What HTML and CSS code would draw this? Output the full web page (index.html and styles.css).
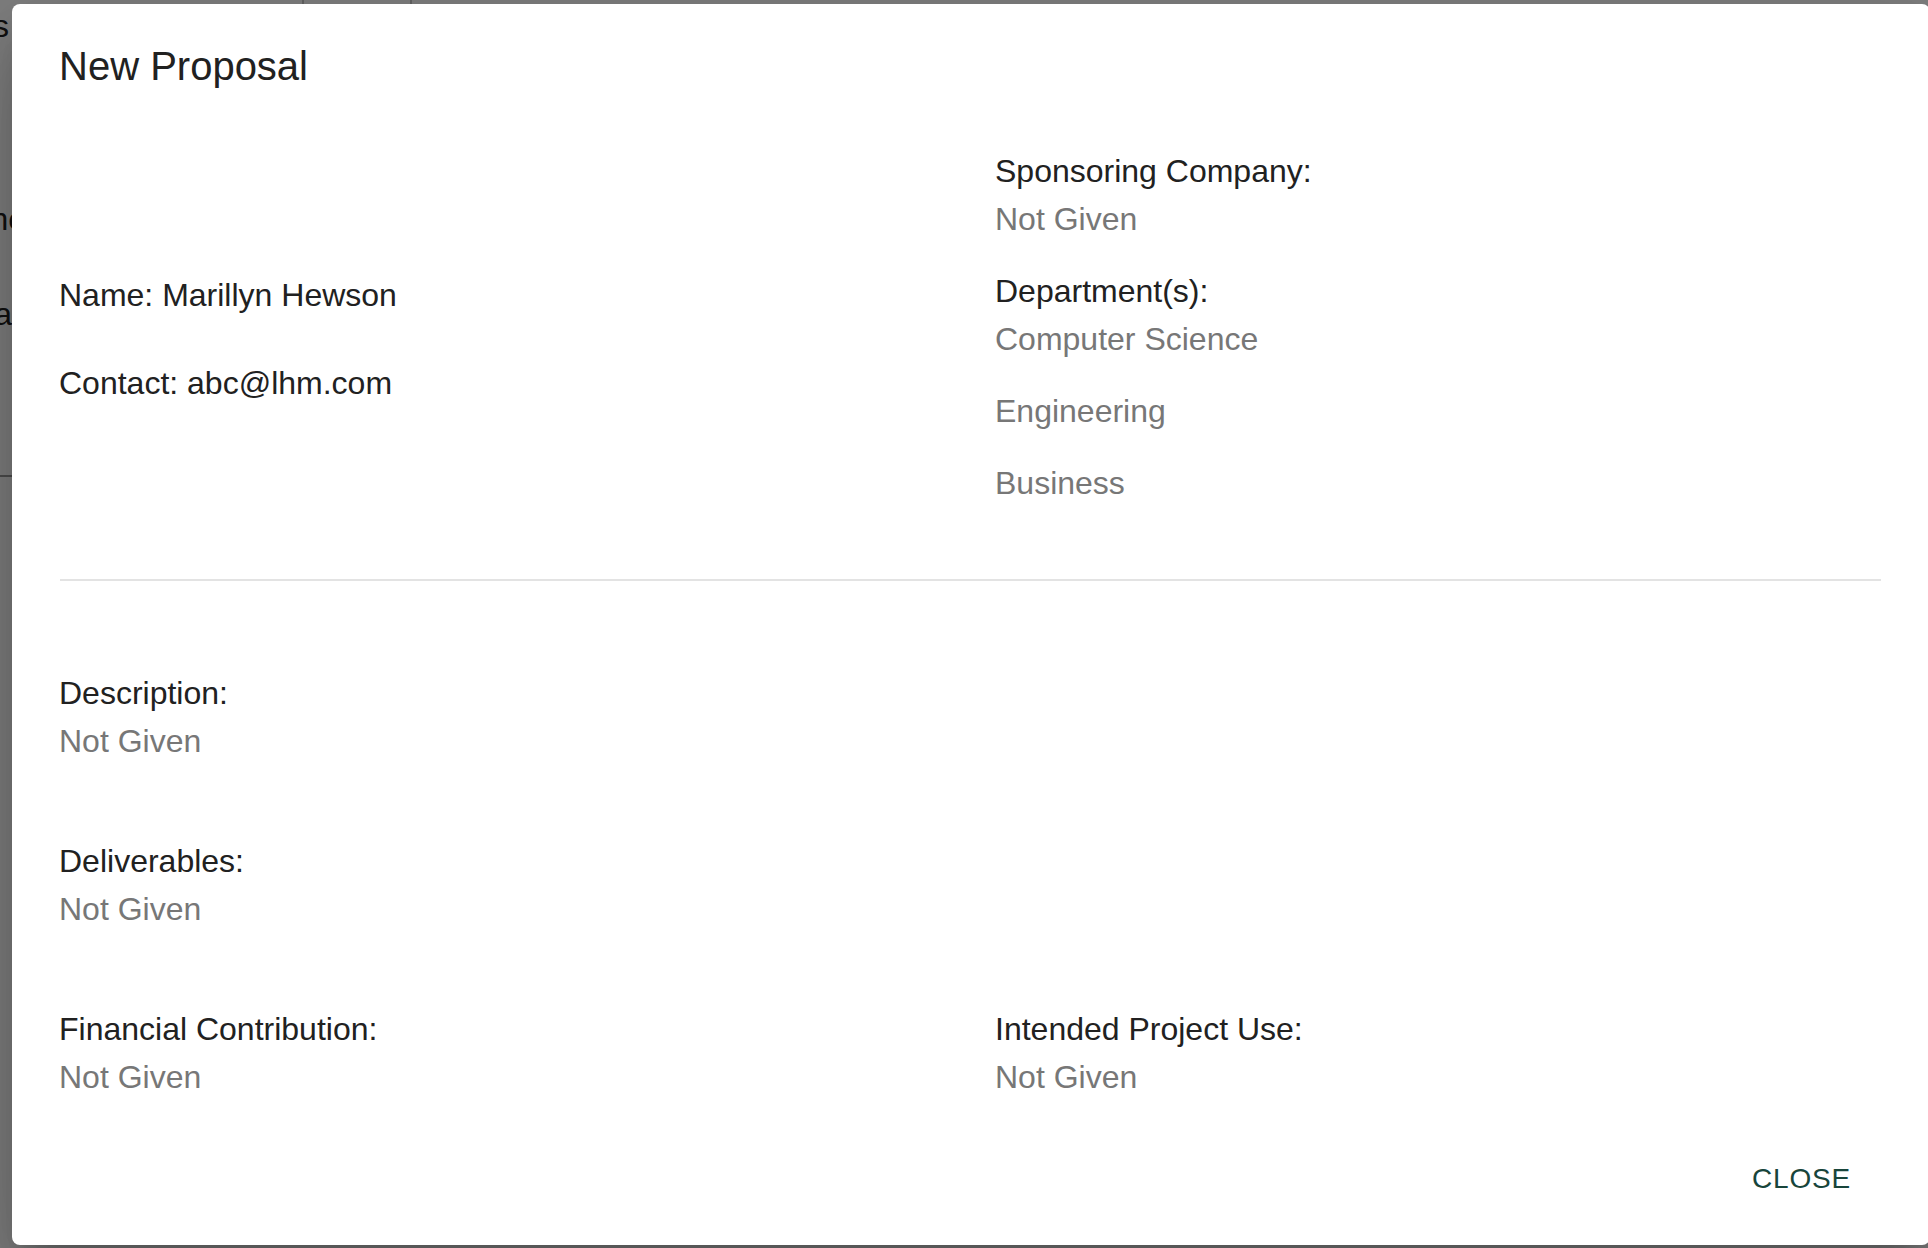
FILE: index.html
```html
<!DOCTYPE html>
<html lang="en">
<head>
<meta charset="utf-8">
<title>New Proposal</title>
<link rel="stylesheet" href="styles.css">
</head>
<body>
<div class="page">
  <div class="frag frag-1">Proposals</div>
  <div class="frag frag-2">Phone</div>
  <div class="frag frag-3">Data</div>
  <div class="rule rule-v1"></div>
  <div class="rule rule-v2"></div>
  <div class="rule rule-h"></div>
  <div class="backdrop"></div>

  <div class="dialog" role="dialog" aria-labelledby="dlg-title">
    <h2 class="title" id="dlg-title">New Proposal</h2>

    <div class="top-grid">
      <div class="contact-col">
        <p class="line">Name: Marillyn Hewson</p>
        <p class="line contact">Contact: abc@lhm.com</p>
      </div>
      <div class="info-col">
        <div class="field">
          <p class="label">Sponsoring Company:</p>
          <p class="value">Not Given</p>
        </div>
        <div class="field spaced">
          <p class="label">Department(s):</p>
          <p class="value">Computer Science</p>
          <p class="value extra">Engineering</p>
          <p class="value extra">Business</p>
        </div>
      </div>
    </div>

    <hr class="divider">

    <div class="field first-section">
      <p class="label">Description:</p>
      <p class="value">Not Given</p>
    </div>
    <div class="field section">
      <p class="label">Deliverables:</p>
      <p class="value">Not Given</p>
    </div>
    <div class="bottom-grid section">
      <div class="field">
        <p class="label">Financial Contribution:</p>
        <p class="value">Not Given</p>
      </div>
      <div class="field">
        <p class="label">Intended Project Use:</p>
        <p class="value">Not Given</p>
      </div>
    </div>

    <div class="actions">
      <button class="btn" type="button">Close</button>
    </div>
  </div>
</div>
</body>
</html>
```

FILE: styles.css
```css
html, body {
  margin: 0;
  padding: 0;
}

body {
  width: 1928px;
  height: 1248px;
  overflow: hidden;
  background: #ffffff;
  font-family: "Liberation Sans", Arial, Helvetica, sans-serif;
}

.page {
  position: relative;
  width: 1928px;
  height: 1248px;
  overflow: hidden;
  background: #ffffff;
}

/* fragments of the page behind the backdrop */
.frag {
  position: absolute;
  font-size: 32px;
  line-height: 48px;
  color: #222222;
  white-space: nowrap;
}
.frag-1 { right: 1919px; top: 2px; }
.frag-2 { right: 1902px; top: 195px; }
.frag-3 { right: 1916px; top: 290px; }

.rule {
  position: absolute;
  background: #c8c8c8;
}
.rule-v1 { left: 302px; top: 0; width: 2px; height: 40px; }
.rule-v2 { left: 410px; top: 0; width: 2px; height: 40px; }
.rule-h { left: 0; top: 475px; width: 60px; height: 2px; background: #9a9a9a; }

.backdrop {
  position: absolute;
  inset: 0;
  background: rgba(0, 0, 0, 0.5);
}

.dialog {
  position: absolute;
  left: 12px;
  top: 4px;
  width: 1918px;
  height: 1241px;
  box-sizing: border-box;
  padding: 0 48px 0 47px;
  background: #ffffff;
  border-radius: 8px;
  box-shadow:
    0 22px 30px -14px rgba(0, 0, 0, 0.2),
    0 48px 76px 6px rgba(0, 0, 0, 0.14),
    0 18px 92px 16px rgba(0, 0, 0, 0.12);
  display: flex;
  flex-direction: column;
}

.title {
  margin: 0;
  padding-top: 30px;
  font-size: 40px;
  line-height: 64px;
  font-weight: 400;
  color: #212121;
}

p {
  margin: 0;
  font-size: 32px;
  line-height: 48px;
}

.top-grid {
  display: grid;
  grid-template-columns: 936px 1fr;
  margin-top: 49px;
}

.contact-col {
  padding-top: 124px;
}

.line {
  color: #212121;
}

.contact {
  margin-top: 40px;
}

.label {
  color: #212121;
}

.value {
  color: #777777;
}

.spaced {
  margin-top: 24px;
}

.extra {
  margin-top: 24px;
}

.divider {
  margin: 72px 1px 0 1px;
  border: 0;
  height: 2px;
  background: #e3e3e3;
}

.first-section {
  margin-top: 88px;
}

.section {
  margin-top: 72px;
}

.bottom-grid {
  display: grid;
  grid-template-columns: 936px 1fr;
}

.actions {
  margin-top: auto;
  padding-bottom: 42px;
  display: flex;
  justify-content: flex-end;
}

.btn {
  margin: 0 15px 0 0;
  padding: 0 16px;
  border: 0;
  background: transparent;
  font-family: "Liberation Sans", Arial, Helvetica, sans-serif;
  font-size: 28px;
  line-height: 49px;
  letter-spacing: 0.8px;
  text-transform: uppercase;
  color: #18453b;
  cursor: pointer;
}
```
